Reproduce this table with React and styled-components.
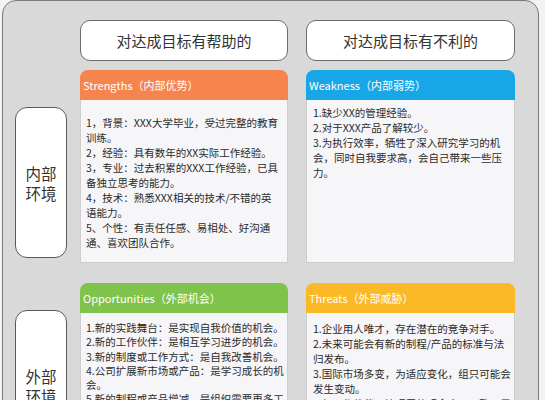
import React from 'react'
import styled, { createGlobalStyle } from 'styled-components'

const Global = createGlobalStyle`
  body {
    margin: 0;
    background: #f3f3f3;
    overflow: hidden;
    font-family: "Noto Sans CJK SC", "Noto Sans", sans-serif;
  }
`

const Panel = styled.div`
  box-sizing: border-box;
  margin-left: 2px;
  width: 537px;
  min-height: 520px;
  padding: 19px 0 0 12px;
  background: #d9d9d9;
  border: 1px solid #7a7a7a;
  border-radius: 14px 14px 0 0;
`

const Row = styled.div`
  display: flex;
  align-items: flex-start;
  margin-bottom: ${p => p.$gap}px;
`

const Gutter = styled.div`
  width: 52px;
  margin-right: 13px;
  flex-shrink: 0;
`

const Pair = styled.div`
  display: grid;
  grid-template-columns: 208px 209px;
  column-gap: 18px;
`

const TitleBox = styled.div`
  box-sizing: border-box;
  height: 41px;
  display: flex;
  align-items: center;
  justify-content: center;
  background: #fff;
  border: 1px solid #6b6b6b;
  border-radius: 10px;
  font-size: 15px;
  color: #333;
`

const SideLabel = styled.div`
  box-sizing: border-box;
  width: 52px;
  height: 151px;
  margin-top: ${p => p.$top}px;
  display: flex;
  align-items: center;
  justify-content: center;
  text-align: center;
  background: #fff;
  border: 1px solid #5a5a5a;
  border-radius: 12px;
  font-size: 15.5px;
  line-height: 20px;
  color: #333;
`

const Card = styled.div`
  display: flex;
  flex-direction: column;
  height: 193px;
`

const CardHead = styled.div`
  height: 30px;
  display: flex;
  align-items: center;
  padding-left: 3px;
  background: ${p => p.$color};
  border-radius: 8px 8px 0 0;
  color: #fff;
  font-size: 11px;
`

const CardBody = styled.div`
  flex: 1;
  box-sizing: border-box;
  background: #f6f5f8;
  border: 1px solid #cdcdcd;
  border-top: none;
  padding: ${p => p.$pad};
  font-size: 10.5px;
  line-height: ${p => p.$lh || 15}px;
  color: #2b2b2b;
  overflow: hidden;
`

const Item = styled.p`
  margin: 0;
`

const cards = {
  s: {
    title: 'Strengths（内部优势）',
    color: '#f5854d',
    pad: '15px 7px 0 5px',
    items: [
      '1，背景：XXX大学毕业，受过完整的教育训练。',
      '2，经验：具有数年的XX实际工作经验。',
      '3，专业：过去积累的XXX工作经验，已具备独立思考的能力。',
      '4，技术：熟悉XXX相关的技术/不错的英语能力。',
      '5、个性：有责任任感、易相处、好沟通通、喜欢团队合作。',
    ],
  },
  w: {
    title: 'Weakness（内部弱势）',
    color: '#17a7e7',
    pad: '5px 2.5px 0 6px',
    items: [
      '1.缺少XX的管理经验。',
      '2.对于XXX产品了解较少。',
      '3.为执行效率，牺牲了深入研究学习的机会，同时自我要求高，会自己带来一些压力。',
    ],
  },
  o: {
    title: 'Opportunities（外部机会）',
    color: '#7fc24c',
    pad: '8px 2px 0 5px',
    lh: 14.3,
    items: [
      '1.新的实践舞台：是实现自我价值的机会。',
      '2.新的工作伙伴：是相互学习进步的机会。',
      '3.新的制度或工作方式：是自我改善机会。',
      '4.公司扩展新市场或产品：是学习成长的机会。',
      '5.新的制程或产品增减，是组织需要更多工作经验的机会。',
    ],
  },
  t: {
    title: 'Threats（外部威胁）',
    color: '#fbb827',
    pad: '8px 2.5px 0 6px',
    items: [
      '1.企业用人唯才，存在潜在的竞争对手。',
      '2.未来可能会有新的制程/产品的标准与法归发布。',
      '3.国际市场多变，为适应变化，组只可能会发生变动。',
      '4.与工作伙伴、管理层的观念会不一致，需要更多沟通。',
    ],
  },
}

const SwotCard = ({ data }) => (
  <Card>
    <CardHead $color={data.color}>{data.title}</CardHead>
    <CardBody $pad={data.pad} $lh={data.lh}>
      {data.items.map(t => <Item key={t}>{t}</Item>)}
    </CardBody>
  </Card>
)

const App = () => {
  return (
    <>
      <Global />
      <Panel>
        <Row $gap={9}>
          <Gutter />
          <Pair>
            <TitleBox>对达成目标有帮助的</TitleBox>
            <TitleBox>对达成目标有不利的</TitleBox>
          </Pair>
        </Row>
        <Row $gap={20}>
          <Gutter>
            <SideLabel $top={37}>内部<br />环境</SideLabel>
          </Gutter>
          <Pair>
            <SwotCard data={cards.s} />
            <SwotCard data={cards.w} />
          </Pair>
        </Row>
        <Row $gap={0}>
          <Gutter>
            <SideLabel $top={27}>外部<br />环境</SideLabel>
          </Gutter>
          <Pair>
            <SwotCard data={cards.o} />
            <SwotCard data={cards.t} />
          </Pair>
        </Row>
      </Panel>
    </>
  )
}

export default App
